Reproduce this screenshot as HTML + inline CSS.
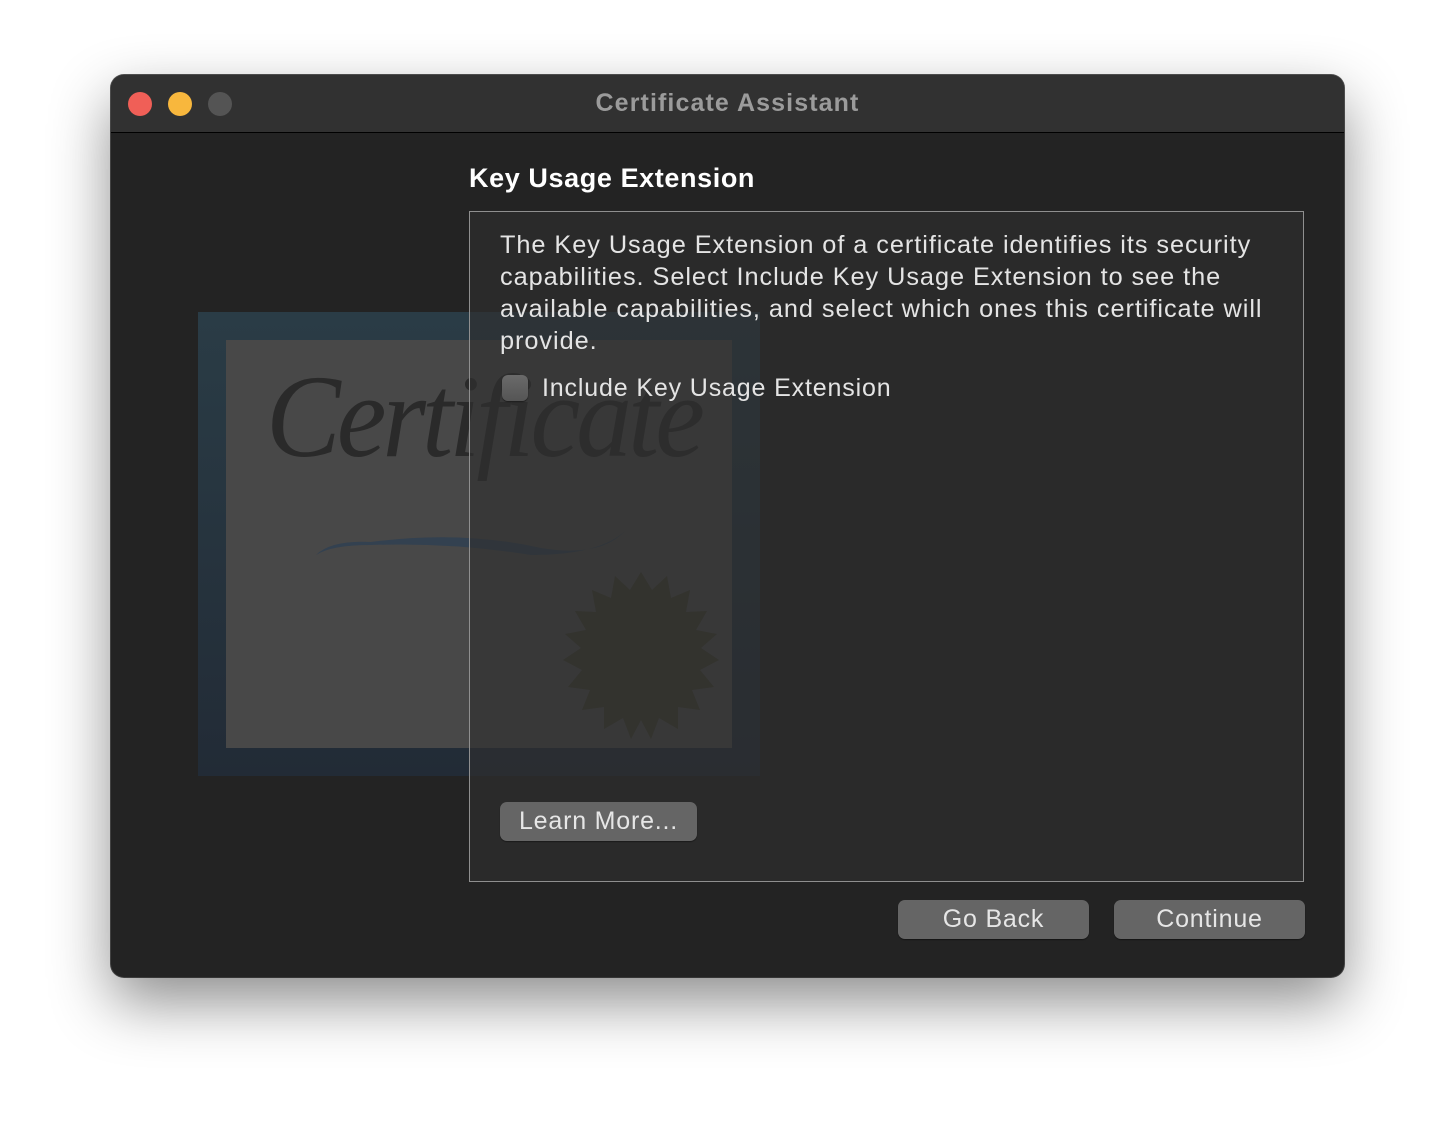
<!DOCTYPE html>
<html><head><style>
body{margin:0;width:1456px;height:1126px;background:#fff;font-family:"Liberation Sans",sans-serif;position:relative;overflow:hidden}
.win{position:absolute;left:111px;top:75px;width:1233px;height:902px;border-radius:13px;background:#232323;box-shadow:0 25px 60px rgba(0,0,0,.45),0 0 0 1px #555;overflow:hidden}
.tb{position:absolute;left:0;top:0;width:100%;height:57px;background:#313131;border-bottom:1px solid #000}
.dot{position:absolute;top:17px;width:24px;height:24px;border-radius:50%}
.title{position:absolute;top:14px;left:0;width:100%;text-align:center;color:#9b9b9b;font-weight:bold;font-size:25px;letter-spacing:1.1px}
.a{position:absolute}
.btn{position:absolute;background:#656565;border-radius:7px;color:#e6e6e6;font-size:25px;letter-spacing:.8px;text-align:center;line-height:39px;height:39px;box-shadow:0 1px 1px rgba(0,0,0,.4)}
</style></head><body>
<div class="win">
 <div class="tb">
  <div class="dot" style="left:17px;background:#f05f57"></div>
  <div class="dot" style="left:57px;background:#f8b73d"></div>
  <div class="dot" style="left:97px;background:#545454"></div>
  <div class="title">Certificate Assistant</div>
 </div>
 <div class="a" style="left:87px;top:237px;width:562px;height:464px;background:linear-gradient(#2a3c46,#222b36)"></div>
 <div class="a" style="left:115px;top:265px;width:506px;height:408px;background:#484848"></div>
 <div class="a" style="left:155px;top:278px;font-family:'Liberation Serif',serif;font-style:italic;font-size:112px;color:#2a2a2a;letter-spacing:-4px;transform:scaleY(1.05)">Certificate</div>
 <svg class="a" style="left:200px;top:445px" width="330" height="50"><path d="M5 35 Q20 20 60 22 Q150 10 230 28 Q290 38 315 10 Q290 35 220 35 Q140 22 60 25 Q20 25 5 35Z" fill="#334150"/></svg>
 <svg class="a" style="left:440px;top:495px" width="180" height="180"><polygon fill="#3a3a2e" points="90,2 101,20 116,6 120,28 139,20 135,42 156,41 145,60 166,64 150,78 168,90 149,100 163,117 141,120 149,140 127,137 127,159 108,148 100,169 90,150 80,169 72,148 53,159 53,137 31,140 39,120 17,117 31,100 12,90 30,78 14,64 35,60 24,41 45,42 41,20 60,28 64,6 79,20"/></svg>
 <div class="a" style="left:358px;top:136px;width:833px;height:669px;border:1.5px solid #8f8f8f;background:rgba(46,46,46,.62)"></div>
 <div class="a" style="left:358px;top:88px;color:#fff;font-weight:bold;font-size:27px;letter-spacing:.6px">Key Usage Extension</div>
 <div class="a" style="left:389px;top:154px;width:790px;color:#e4e4e4;font-size:25.3px;line-height:32px;letter-spacing:.95px">The Key Usage Extension of a certificate identifies its security capabilities. Select Include Key Usage Extension to see the available capabilities, and select which ones this certificate will provide.</div>
 <div class="a" style="left:391px;top:300px;width:26px;height:26px;border-radius:6px;background:linear-gradient(#6a6a6a,#555);box-shadow:0 1px 1px rgba(0,0,0,.5)"></div>
 <div class="a" style="left:431px;top:299px;color:#e4e4e4;font-size:25px;letter-spacing:.85px">Include Key Usage Extension</div>
 <div class="btn" style="left:389px;top:727px;width:197px">Learn More...</div>
 <div class="btn" style="left:787px;top:825px;width:191px">Go Back</div>
 <div class="btn" style="left:1003px;top:825px;width:191px">Continue</div>
</div>
</body></html>
